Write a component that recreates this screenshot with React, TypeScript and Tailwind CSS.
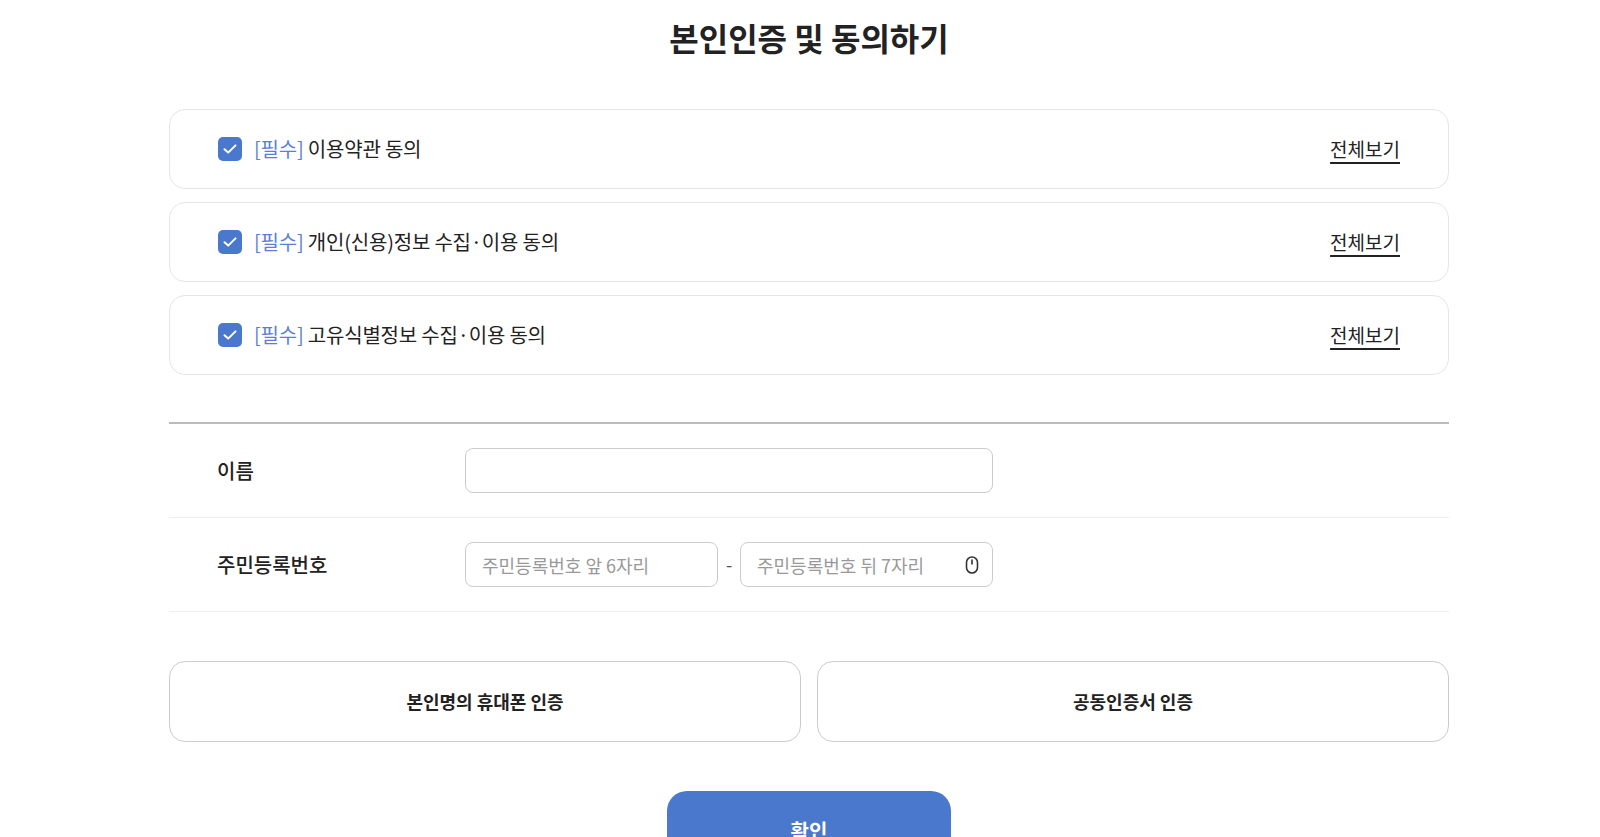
import React, { useState } from 'react';

const FONT = { fontFamily: '"Noto Sans CJK KR", "Noto Sans", sans-serif' };

const terms = [
  '이용약관 동의',
  '개인(신용)정보 수집·이용 동의',
  '고유식별정보 수집·이용 동의',
];

const CheckBox: React.FC<{ checked: boolean; onClick: () => void }> = ({ checked, onClick }) => (
  <button
    onClick={onClick}
    className={`w-6 h-6 rounded-[5px] flex items-center justify-center shrink-0 ${
      checked ? 'bg-[#4a78cc]' : 'border border-[#ccc] bg-white'
    }`}
  >
    {checked && (
      <svg width="18" height="18" viewBox="0 0 18 18" fill="none">
        <path d="M3.5 9.2L7.2 12.6L14.5 5.4" stroke="white" strokeWidth="2" strokeLinecap="round" strokeLinejoin="round" />
      </svg>
    )}
  </button>
);

// Small mouse-like toggle icon inside the input
const MaskIcon = () => (
  <svg width="14" height="19" viewBox="0 0 14 19" fill="none">
    <rect x="1.5" y="1.5" width="11" height="16" rx="5.5" stroke="#333" strokeWidth="1.6" />
    <path d="M7 4.5V8.5" stroke="#333" strokeWidth="1.6" strokeLinecap="round" />
  </svg>
);

export default function App() {
  const [checked, setChecked] = useState([true, true, true]);

  const toggle = (i: number) => setChecked(prev => prev.map((c, idx) => (idx === i ? !c : c)));

  return (
    <div className="min-h-screen bg-white text-[#222] flex justify-center pl-[18px]" style={FONT}>
      <div className="w-[1280px] flex flex-col">
        {/* Title */}
        <h1 className="pt-[13px] h-[63px] text-center text-[32px] leading-[48px] font-bold text-[#222]">
          본인인증 및 동의하기
        </h1>

        {/* Agreements */}
        <div className="mt-[46px] flex flex-col gap-[13px]">
          {terms.map((t, i) => (
            <div
              key={t}
              className="h-20 border border-[#e6e6e6] rounded-[16px] px-12 flex items-center justify-between"
            >
              <div className="flex items-center gap-3">
                <CheckBox checked={checked[i]} onClick={() => toggle(i)} />
                <span className="text-[20px] leading-none tracking-[-0.2px]">
                  <span className="text-[#5b7fd6]">[필수]</span> {t}
                </span>
              </div>
              <a href="#" className="text-[19px] underline underline-offset-[5px] decoration-[1.5px] text-[#222]">
                전체보기
              </a>
            </div>
          ))}
        </div>

        {/* Form */}
        <div className="mt-[47px] border-t-2 border-[#bbb]">
          <div className="h-[94px] border-b border-[#eee] flex items-center pl-12">
            <label className="w-[248px] text-[20px] font-medium">이름</label>
            <input className="w-[528px] h-[45px] border border-[#ccc] rounded-[8px] px-4 text-[18px] outline-none" />
          </div>
          <div className="h-[94px] border-b border-[#eee] flex items-center pl-12">
            <label className="w-[248px] text-[20px] font-medium">주민등록번호</label>
            <div className="flex items-center">
              <input
                placeholder="주민등록번호 앞 6자리"
                className="w-[253px] h-[45px] border border-[#ccc] rounded-[8px] px-4 text-[18px] placeholder-[#999] outline-none"
              />
              <span className="w-[22px] text-center text-[18px] text-[#555]">-</span>
              <div className="relative">
                <input
                  type="password"
                  placeholder="주민등록번호 뒤 7자리"
                  className="w-[253px] h-[45px] border border-[#ccc] rounded-[8px] pl-4 pr-10 text-[18px] placeholder-[#999] outline-none"
                />
                <span className="absolute right-[14px] top-1/2 -translate-y-1/2 flex">
                  <MaskIcon />
                </span>
              </div>
            </div>
          </div>
        </div>

        {/* Auth methods */}
        <div className="mt-[49px] grid grid-cols-2 gap-4">
          <button className="h-[81px] border border-[#ccc] rounded-[16px] text-[18px] font-bold text-[#222]">
            본인명의 휴대폰 인증
          </button>
          <button className="h-[81px] border border-[#ccc] rounded-[16px] text-[18px] font-bold text-[#222]">
            공동인증서 인증
          </button>
        </div>

        {/* Confirm */}
        <div className="mt-[49px] flex justify-center pb-10">
          <button className="w-[284px] h-20 bg-[#4a78cc] rounded-[20px] text-white text-[20px] font-bold">
            확인
          </button>
        </div>
      </div>
    </div>
  );
}
